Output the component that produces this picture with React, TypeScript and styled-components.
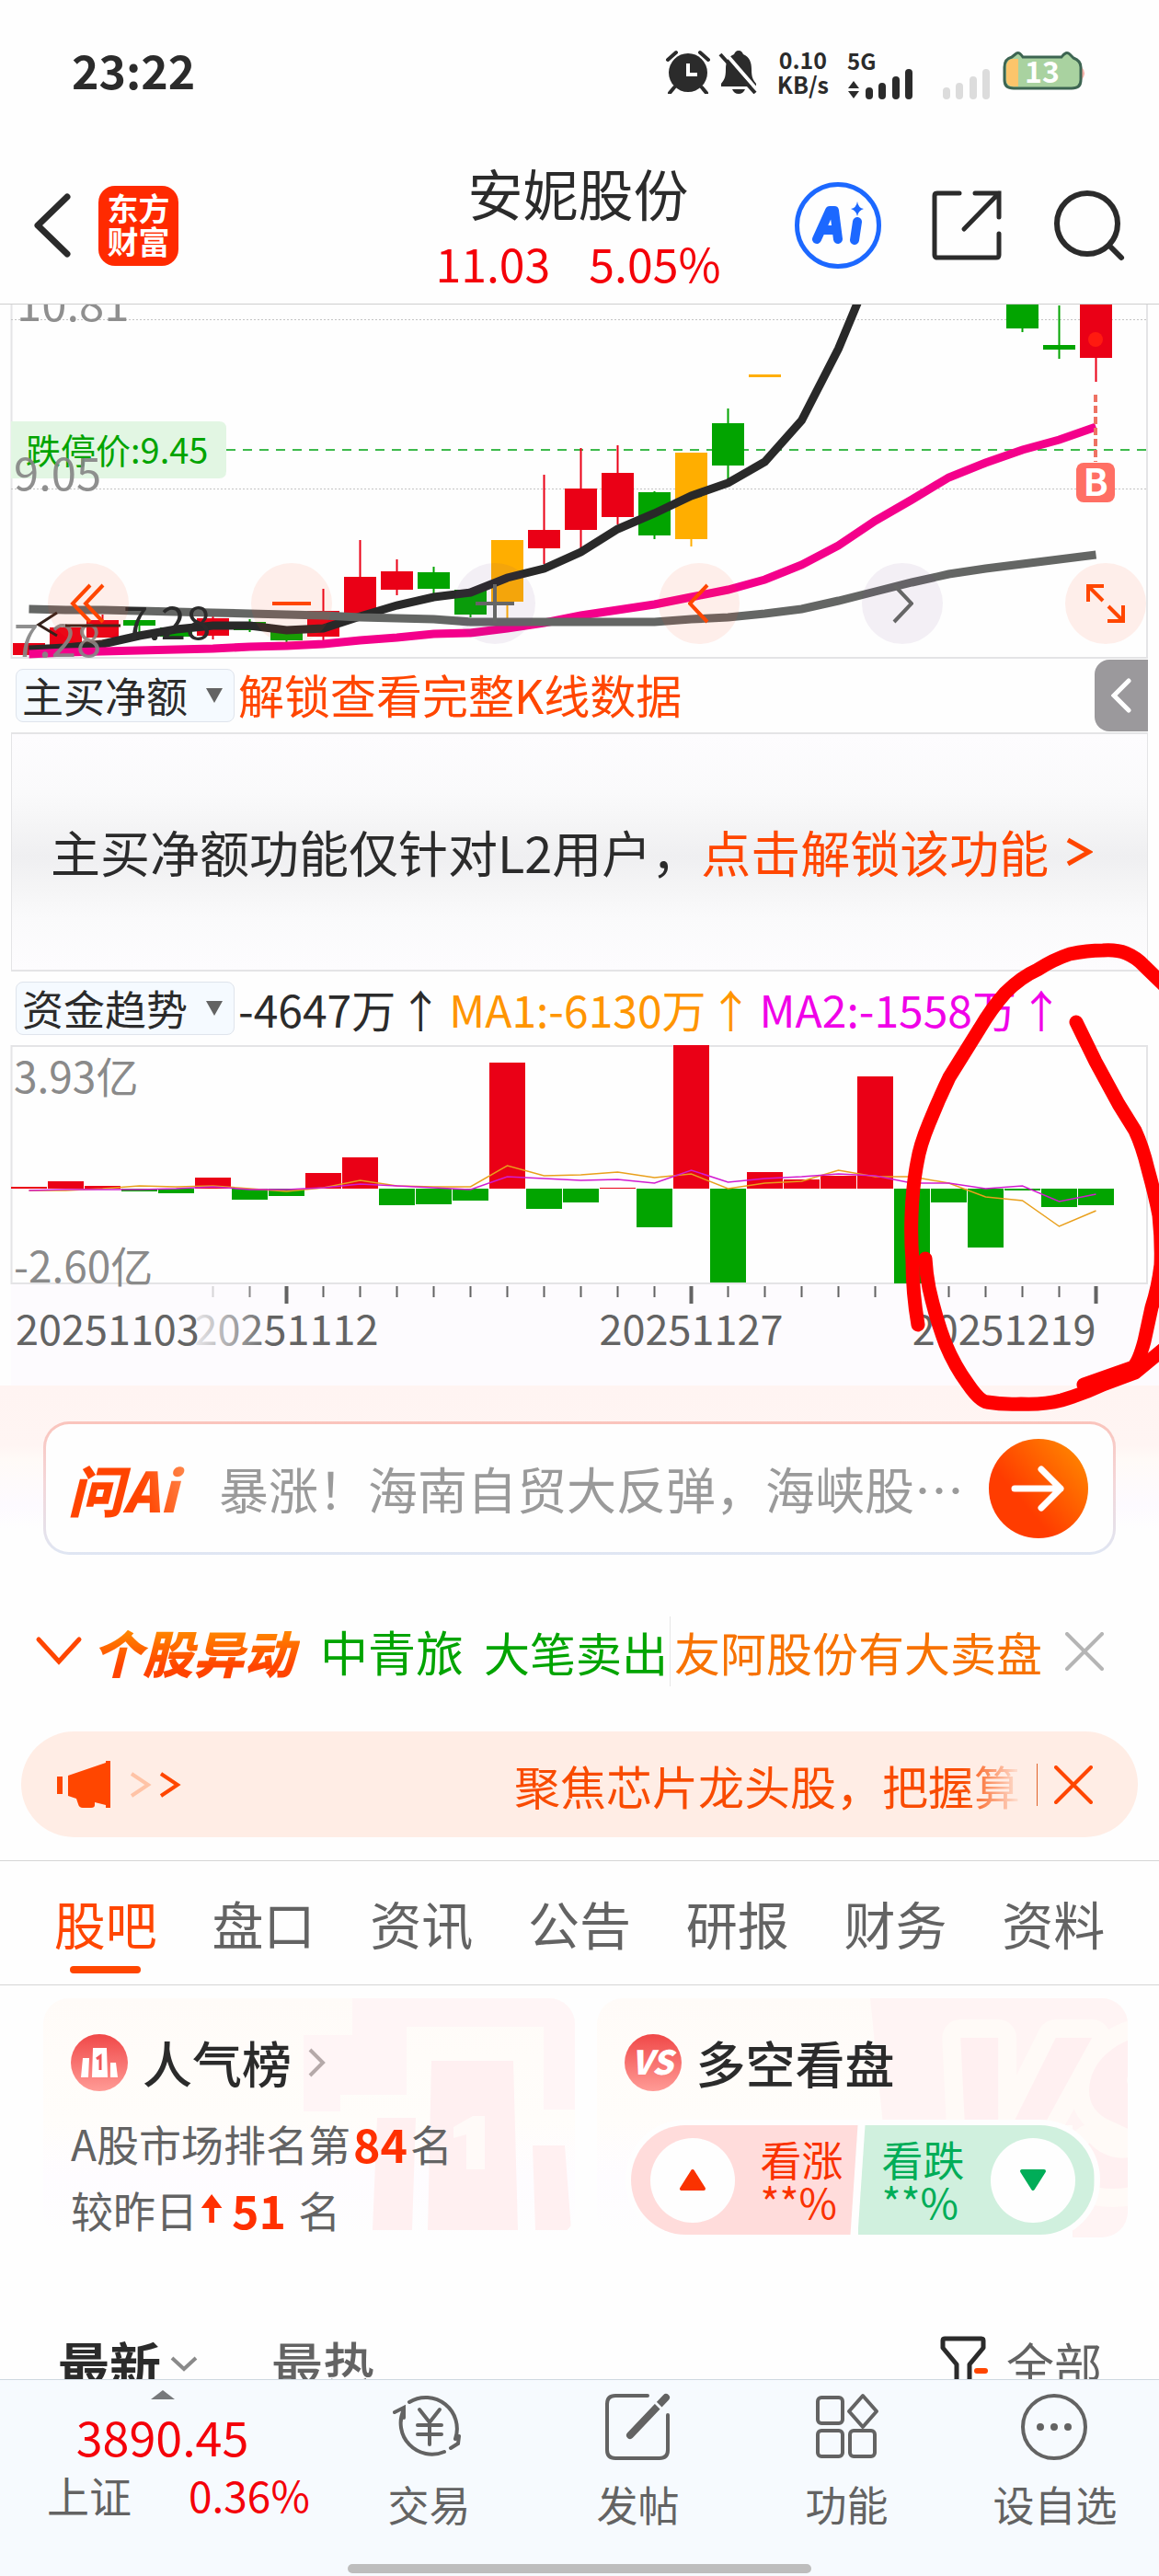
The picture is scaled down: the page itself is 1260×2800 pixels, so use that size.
import React from "react";
import styled, { createGlobalStyle } from "styled-components";

const C = {
  ink: "#2b2b2b",
  gray: "#636363",
  soft: "#8a8a8a",
  red: "#f40009",
  up: "#ea0016",
  down: "#02a400",
  gold: "#ffae00",
  accent: "#ff4600",
  line: "#e4e4e6",
};

const Global = createGlobalStyle`
  * { box-sizing: border-box; }
  body { margin: 0; background: #fefefe; }
  button, input, select { font: inherit; color: inherit; border: 0; background: none; padding: 0; margin: 0; }
  a { color: inherit; text-decoration: none; }
  h1, h2, p { margin: 0; font-weight: 400; }
  svg { display: block; flex: none; }
`;

const Page = styled.div`
  height: 100vh;
  display: flex;
  flex-direction: column;
  overflow: hidden;
  background: #fefefe;
  color: ${C.ink};
  font-family: "Noto Sans CJK SC", "Noto Sans", sans-serif;
`;

/* ---------- status bar ---------- */
const StatusBar = styled.div`
  height: 148px;
  flex: none;
  display: flex;
  align-items: center;
  justify-content: space-between;
  padding: 8px 78px 0;
`;
const Clock = styled.time`
  font-size: 50px;
  line-height: 60px;
  font-weight: 700;
  padding-bottom: 6px;
`;
const StatusIcons = styled.div`
  display: flex;
  align-items: center;
`;
const AlarmIcon = styled.svg`
  margin-right: 8px;
`;
const WeakSignal = styled.svg`
  margin: 0 12px 0 31px;
`;
const Speed = styled.div`
  margin: 0 20px;
  font-size: 25px;
  line-height: 27px;
  font-weight: 700;
  text-align: center;
`;

function StatusGlyphs() {
  return (
    <StatusIcons>
      <AlarmIcon width="50" height="48" viewBox="0 0 50 48">
        <circle cx="25" cy="25" r="21" fill={C.ink} />
        <path d="M25 15v12h10" fill="none" stroke="#fff" strokeWidth="4" />
        <path d="M3 11L12 3M47 11L38 3M10 41l-5 6M40 41l5 6" stroke={C.ink} strokeWidth="4" strokeLinecap="round" />
      </AlarmIcon>
      <svg width="44" height="48" viewBox="0 0 44 48">
        <path d="M22 1c3 0 4 2 5 4 7 3 9 9 9 16 0 10 2 12 5 16v3H3v-3c3-4 5-6 5-16 0-7 2-13 9-16 1-2 2-4 5-4zM15 43h14c-1 3-4 5-7 5s-6-2-7-5z" fill={C.ink} />
        <path d="M6 2L44 46" stroke="#fefefe" strokeWidth="4" />
        <path d="M2 5L40 47" stroke={C.ink} strokeWidth="4" />
      </svg>
      <Speed>
        0.10
        <br />
        KB/s
      </Speed>
      <svg width="72" height="66" viewBox="0 -12 72 66">
        <text x="0" y="19" fontSize="24" fontWeight="700" fill={C.ink}>5G</text>
        <path d="M7 31l6 8H1zM7 50l6-8H1z" fill={C.ink} />
        <path d="M24 47V42M38 47V37M53 47V30M67 47V22" stroke={C.ink} strokeWidth="8" strokeLinecap="round" />
      </svg>
      <WeakSignal width="54" height="66" viewBox="0 -12 54 66">
        <path d="M5 47V42M19 47V37M34 47V30M48 47V22" stroke="#dcdcdc" strokeWidth="8" strokeLinecap="round" />
      </WeakSignal>
      <svg width="92" height="52" viewBox="0 -4 92 52">
        <path d="M86 17q6 6 0 14z" fill="#f4b0a8" />
        <path d="M10 6l5-4q3-2 7 4h42q5-7 9-3l4 4q8 3 8 10v14q0 9-10 9H12Q2 40 2 31V17Q2 8 10 6z" fill="#a9d2a0" stroke="#3d6552" strokeWidth="3" />
        <path d="M10 8h7v30h-5q-8 0-8-8V17q0-7 6-9z" fill="#fcc56b" />
        <text x="43" y="34" textAnchor="middle" fontSize="32" fontWeight="700" fill="#fff">13</text>
      </svg>
    </StatusIcons>
  );
}

/* ---------- header ---------- */
const Header = styled.header`
  height: 183px;
  flex: none;
  display: grid;
  grid-template-columns: 1fr auto 1fr;
  align-items: center;
  padding: 12px 36px 0 33px;
  border-bottom: 1px solid #cfcfcf;
`;
const HeaderSide = styled.div<{ $end?: boolean }>`
  display: flex;
  align-items: center;
  gap: ${(p) => (p.$end ? 54 : 28)}px;
  justify-content: ${(p) => (p.$end ? "flex-end" : "flex-start")};
`;
const IconButton = styled.button`
  display: flex;
  align-items: center;
  justify-content: center;
  cursor: pointer;
`;
const AppLogo = styled.a`
  width: 87px;
  height: 87px;
  border-radius: 18px;
  background: #ff2a00;
  color: #fff;
  font-size: 34px;
  line-height: 36px;
  font-weight: 700;
  text-align: center;
  padding-top: 6px;
`;
const StockTitle = styled.div`
  text-align: center;
  line-height: 76px;
  padding-top: 4px;
`;
const StockName = styled.h1`
  font-size: 60px;
  line-height: 76px;
`;
const Quote = styled.p`
  display: flex;
  justify-content: center;
  gap: 42px;
  font-size: 50px;
  line-height: 76px;
  color: ${C.red};
`;

/* ---------- k-line ---------- */
const ChartBox = styled.section`
  position: relative;
  flex: none;
`;
const FullSvg = styled.svg`
  width: 100%;
  height: auto;
`;
const ChartTools = styled.div`
  position: absolute;
  left: 52px;
  right: 14px;
  bottom: 16px;
  display: flex;
  justify-content: space-between;
`;
const RoundTool = styled.button<{ $muted?: boolean }>`
  width: 88px;
  height: 88px;
  border-radius: 50%;
  background: ${(p) => (p.$muted ? "rgba(110,70,140,.08)" : "rgba(255,80,30,.09)")};
  color: ${(p) => (p.$muted ? "#666" : C.accent)};
  display: flex;
  align-items: center;
  justify-content: center;
`;

const cx = (k: number) => 31.5 + 40 * k;
const up = C.up;
const dn = C.down;
const go = C.gold;
/* index, colour, body top, body bottom, wick top, wick bottom */
const candles: [number, string, number, number, number, number][] = [
  [0, up, 699, 712, 699, 712],
  [1, up, 682, 703, 682, 703],
  [2, up, 674, 693, 668, 693],
  [3, dn, 674, 680, 674, 687],
  [4, dn, 682, 692, 678, 694],
  [5, up, 672, 691, 670, 695],
  [6, dn, 676, 685, 673, 687],
  [7, dn, 687, 696, 687, 698],
  [8, up, 664, 692, 640, 696],
  [9, up, 627, 675, 587, 675],
  [10, up, 621, 641, 608, 647],
  [11, dn, 622, 640, 616, 646],
  [12, dn, 641, 668, 641, 671],
  [13, go, 587, 654, 587, 672],
  [14, up, 576, 596, 516, 613],
  [15, up, 531, 576, 487, 597],
  [16, up, 514, 562, 484, 570],
  [17, dn, 535, 582, 534, 586],
  [18, go, 492, 586, 492, 594],
  [19, dn, 460, 506, 444, 523],
  [20, go, 407, 410, 407, 410],
  [27, dn, 300, 357, 300, 361],
  [28, dn, 375, 380, 332, 390],
  [29, up, 300, 389, 300, 415],
];
const maBlack = [706, 704, 700, 691, 684, 680, 680, 685, 683, 670, 658, 649, 644, 628, 618, 600, 575, 558, 539, 525, 502, 457, 379, 283];
const maPink = [711, 709, 708, 707, 706, 705, 703, 702, 700, 696, 693, 689, 688, 683, 677, 669, 663, 657, 649, 641, 630, 614, 593, 566, 543, 519, 503, 489, 478, 464];
const maGray = [662, 663, 663, 664, 665, 666, 667, 668, 669, 671, 672, 673, 676, 676, 676, 676, 676, 676, 673, 671, 667, 662, 653, 643, 633, 624, 618, 613, 608, 603];
const pts = (a: number[]) => a.map((y, k) => `${cx(k)},${y}`).join(" ");

function KLine() {
  return (
    <FullSvg viewBox="0 331 1260 385" role="img" aria-label="日K线">
      <path d="M12.500 331V715H1247V331" fill="none" stroke={C.line} strokeWidth="2" />
      <path d="M12 347.500H1246M12 531.500H1246" stroke="#c4c4c4" strokeDasharray="2 2" />
      <path d="M12 458h226q8 0 8 8v46q0 8-8 8H12z" fill="#e2f6e3" />
      <path d="M246 489H1246" stroke="#3dba4c" strokeWidth="2" strokeDasharray="10 8" />
      <text x="28" y="504" fontSize="38" fill={C.down}>跌停价:9.45</text>
      {candles.map(([k, c, t, b, wt, wb]) => (
        <g key={k} fill={c}>
          <rect x={cx(k) - 17.5} y={t} width="35" height={b - t} />
          <rect x={cx(k) - 1} y={wt} width="2" height={wb - wt} />
        </g>
      ))}
      <g fill="none" strokeWidth="9">
        <polyline points={pts(maBlack)} stroke="#292929" />
        <polyline points={pts(maPink)} stroke="#f4008b" />
        <polyline points={pts(maGray)} stroke="#646664" />
      </g>
      <g fontSize="49" fill="#858585" fillOpacity=".92">
        <text x="18" y="349">10.81</text>
        <text x="15" y="533">9.05</text>
        <text x="15" y="714">7.28</text>
      </g>
      <circle cx="1191" cy="369" r="8" fill="#ff1a10" />
      <path d="M1191 429v73" stroke="#ee7263" strokeWidth="4" strokeDasharray="8 4" />
      <rect x="1170" y="503" width="42" height="43" rx="8" fill="#ff6f64" />
      <text x="1191" y="539" textAnchor="middle" fontSize="40" fontWeight="700" fill="#fff">B</text>
      <path d="M62 666L42 679L62 691M71 680H131" fill="none" stroke="#33211a" strokeWidth="3" />
      <text x="134" y="695" fontSize="49" fill={C.ink}>7.28</text>
    </FullSvg>
  );
}

/* ---------- indicator rows ---------- */
const IndicatorRow = styled.div`
  height: 80px;
  flex: none;
  display: flex;
  align-items: center;
  padding: 0 12px 0 17px;
`;
const Picker = styled.label`
  flex: none;
  width: 238px;
  height: 58px;
  display: flex;
  align-items: center;
  justify-content: space-between;
  padding: 0 12px 0 6px;
  border: 1px solid #dfe4ec;
  border-radius: 8px;
  background: #f5faff;
`;
const PickerSelect = styled.select`
  appearance: none;
  width: 190px;
  height: 56px;
  font-size: 45px;
  line-height: 56px;
`;
const UnlockLink = styled.a`
  flex: 1;
  margin-left: 4px;
  font-size: 50px;
  line-height: 64px;
  padding-bottom: 4px;
  color: ${C.accent};
`;
const DrawerTab = styled.button`
  width: 58px;
  height: 78px;
  border-radius: 16px 0 0 16px;
  background: #9b999c;
  display: flex;
  align-items: center;
  justify-content: center;
`;
const LockedPanel = styled.div`
  height: 260px;
  flex: none;
  margin: 0 12px;
  padding-left: 42px;
  border: 2px solid ${C.line};
  border-width: 2px 1px;
  background: linear-gradient(#fdfcfe, #fafafb 25%, #f5f5f6 38%, #efeff1 52%, #f5f5f6 66%, #fafafb 78%, #fdfcfe);
  display: flex;
  align-items: center;
  font-size: 54px;
  line-height: 72px;
  white-space: nowrap;
`;
const LockedLink = styled.a`
  color: ${C.accent};
  display: flex;
  align-items: center;
  gap: 18px;
`;
const Reading = styled.span<{ $c: string }>`
  display: flex;
  color: ${(p) => p.$c};
  font-size: 48px;
  line-height: 64px;
  white-space: nowrap;
  margin-left: 4px;
`;
const Arrow = styled.span`
  width: 54px;
  display: flex;
  justify-content: center;
`;

function PickerBox({ name, value }: { name: string; value: string }) {
  return (
    <Picker>
      <PickerSelect aria-label={name} defaultValue={value}>
        <option>{value}</option>
      </PickerSelect>
      <svg width="18" height="16" viewBox="0 0 18 16">
        <path d="M0 0h18L9 16z" fill="#636363" />
      </svg>
    </Picker>
  );
}

/* ---------- fund flow chart ---------- */
const flow = [1290, 1284, 1289, 1295, 1297, 1280, 1304, 1300, 1275, 1258, 1310, 1309, 1305, 1155, 1314, 1307, 1291, 1334, 1136, 1394, 1274, 1282, 1278, 1170, 1395, 1307, 1356, 1294, 1312, 1310];
const flowMa1 = [1294, 1294, 1292, 1289, 1290, 1289, 1292, 1295, 1291, 1283, 1289, 1290, 1290, 1267, 1278, 1277, 1274, 1280, 1276, 1292, 1286, 1284, 1272, 1279, 1279, 1286, 1301, 1305, 1333, 1316];
const flowMa2 = [1294, 1293, 1293, 1293, 1292, 1290, 1293, 1293, 1291, 1287, 1289, 1291, 1293, 1279, 1281, 1283, 1282, 1286, 1272, 1285, 1281, 1279, 1276, 1278, 1286, 1286, 1292, 1289, 1306, 1298];

function FlowChart() {
  return (
    <FullSvg viewBox="0 1136 1260 370" role="img" aria-label="资金趋势">
      <defs>
        <linearGradient id="dateFade">
          <stop offset="0" stopColor="#fdfbfe" />
          <stop offset="1" stopColor="#fdfbfe" stopOpacity="0" />
        </linearGradient>
      </defs>
      <rect x="12" y="1396" width="1248" height="110" fill="#fdfbfe" />
      <path d="M12.500 1395V1137H1247V1395z" fill="none" stroke={C.line} strokeWidth="2" />
      <g fontSize="46" fill={C.soft}>
        <text x="15" y="1188">3.93亿</text>
        <text x="15" y="1394">-2.60亿</text>
      </g>
      {flow.map((y, k) => (
        <rect key={k} x={12 + 40 * k} y={Math.min(y, 1292)} width="39" height={Math.abs(y - 1292)} fill={y < 1292 ? up : dn} />
      ))}
      <polyline points={pts(flowMa1)} fill="none" stroke="#e9a01c" strokeWidth="1.500" />
      <polyline points={pts(flowMa2)} fill="none" stroke="#d21bd0" strokeWidth="1.500" />
      {flow.map((_, k) => {
        const major = k === 7 || k === 18 || k === 29;
        if (k < 5) return null;
        return (
          <rect
            key={k}
            x={cx(k) - (major ? 2 : 1)}
            y="1398"
            width={major ? 4 : 2}
            height={major ? 19 : 12}
            fill="#636363"
            opacity={k === 5 ? 0.25 : k === 6 ? 0.75 : 1}
          />
        );
      })}
      <g fontSize="45" fill="#636363">
        <text x={cx(7)} y="1462" textAnchor="middle">20251112</text>
        <rect x="200" y="1420" width="95" height="50" fill="url(#dateFade)" />
        <text x="17" y="1462">20251103</text>
        <text x={cx(18)} y="1462" textAnchor="middle">20251127</text>
        <text x={cx(29)} y="1462" textAnchor="end">20251219</text>
      </g>
    </FullSvg>
  );
}

const FlowSection = styled.section`
  position: relative;
  flex: none;
`;
const Marker = styled.svg`
  position: absolute;
  top: 0;
  left: 0;
  width: 100%;
  height: auto;
  overflow: hidden;
  pointer-events: none;
  z-index: 2;
  margin-top: -36px;
`;

/* ---------- ask ai ---------- */
const AskSection = styled.section`
  flex: none;
  padding: 39px 47px 50px;
  background: linear-gradient(#fff4f2 0, #fff5f3 65px, #fffaf7 80px, #fdfaff 130px, #fefefe 155px);
`;
const AskCard = styled.form`
  height: 145px;
  display: flex;
  align-items: center;
  gap: 24px;
  padding: 0 27px 0 24px;
  border: 3px solid transparent;
  border-radius: 28px;
  background: linear-gradient(#fefefe, #fefefe) padding-box, linear-gradient(#fac4bc, #f4d6d8 45%, #dfe6f3) border-box;
`;
const AskBrand = styled.label`
  width: 140px;
  font-size: 60px;
  line-height: 80px;
  font-weight: 900;
  font-style: italic;
  white-space: nowrap;
  color: transparent;
  background: linear-gradient(75deg, #ff4400 55%, #ff9a60);
  background-clip: text;
`;
const AskInput = styled.input`
  flex: 1;
  min-width: 0;
  height: 84px;
  font-size: 54px;
  outline: none;
  &::placeholder {
    color: #9a9a9a;
    opacity: 1;
  }
`;
const AskGo = styled.button`
  flex: none;
  width: 108px;
  height: 108px;
  border-radius: 50%;
  background: linear-gradient(50deg, #ff3c00 35%, #ff9100);
  display: flex;
  align-items: center;
  justify-content: center;
`;

/* ---------- movement row ---------- */
const MoveRow = styled.section`
  flex: none;
  height: 110px;
  display: flex;
  align-items: center;
  padding: 0 60px 0 38px;
  font-size: 50px;
  line-height: 76px;
  white-space: nowrap;
`;
const MoveTitle = styled.h2`
  margin: 0 22px 0 10px;
  width: 226px;
  font-size: 55px;
  line-height: 80px;
  font-weight: 900;
  font-style: italic;
  color: transparent;
  background: linear-gradient(#ff8a00 20%, #ff4400 70%);
  background-clip: text;
`;
const MoveItem = styled.a<{ $c: string }>`
  display: flex;
  gap: 22px;
  color: ${(p) => p.$c};
`;
const MoveName = styled.span`
  font-size: 52px;
`;
const MoveRule = styled.span`
  width: 1px;
  height: 76px;
  margin: 0 4px 0 2px;
  background: #e6e6e6;
`;
const Spacer = styled.span`
  flex: 1;
`;

/* ---------- notice ---------- */
const Notice = styled.section`
  flex: none;
  height: 115px;
  margin: 32px 23px 25px;
  padding: 0 49px 0 38px;
  border-radius: 58px;
  background: #ffede5;
  display: flex;
  align-items: center;
  gap: 18px;
  color: ${C.accent};
`;
const NoticeText = styled.p`
  flex: 1;
  text-align: right;
  font-size: 50px;
  line-height: 72px;
  white-space: nowrap;
  color: transparent;
  background: linear-gradient(90deg, #f94b00 93%, rgba(249, 75, 0, 0.05));
  background-clip: text;
`;
const NoticeRule = styled.span`
  width: 1px;
  height: 46px;
  background: #e0622a;
`;

/* ---------- tabs ---------- */
const Tabs = styled.nav`
  flex: none;
  height: 136px;
  display: flex;
  padding: 0 29px;
  border-top: 1px solid #d6d6d6;
  border-bottom: 1px solid #d6d6d6;
`;
const Tab = styled.button<{ $on?: boolean }>`
  flex: 1;
  display: flex;
  flex-direction: column;
  align-items: center;
  padding-top: 28px;
  gap: 8px;
  font-size: 56px;
  line-height: 78px;
  color: ${(p) => (p.$on ? C.accent : C.gray)};
  &::after {
    content: "";
    width: 77px;
    height: 8px;
    border-radius: 4px;
    background: ${(p) => (p.$on ? C.accent : "transparent")};
  }
`;

/* ---------- cards ---------- */
const Cards = styled.section`
  flex: none;
  display: grid;
  grid-template-columns: 1fr 1fr;
  gap: 24px;
  padding: 14px 34px 0 47px;
`;
const Card = styled.article`
  position: relative;
  overflow: hidden;
  height: 260px;
  padding: 36px 30px 0;
  border-radius: 28px;
  background: linear-gradient(#fffbf8, #fffdfa 50%, #fefcff 75%, #fefefe);
`;
const Watermark = styled.svg`
  position: absolute;
  right: 0;
  top: 0;
  height: 260px;
  width: 300px;
`;
const CardHead = styled.h2`
  position: relative;
  display: flex;
  align-items: center;
  gap: 16px;
  font-size: 54px;
  line-height: 68px;
  font-weight: 500;
`;
const CardLine = styled.p<{ $gap: number }>`
  position: relative;
  display: flex;
  align-items: center;
  margin-top: ${(p) => p.$gap}px;
  font-size: 46px;
  line-height: 64px;
  color: ${C.gray};
`;
const Strong = styled.strong`
  font-size: 50px;
  font-weight: 700;
  color: #ff3000;
  margin: 0 3px;
`;
const Vote = styled.div`
  position: relative;
  display: flex;
  width: 504px;
  height: 119px;
  margin: 34px 0 0 7px;
  border-radius: 60px;
  outline: 6px solid #fefefe;
  background: #fefefe;
  overflow: hidden;
`;
const VoteSide = styled.button<{ $down?: boolean }>`
  flex: 1;
  display: flex;
  flex-direction: ${(p) => (p.$down ? "row-reverse" : "row")};
  align-items: center;
  justify-content: space-between;
  padding: ${(p) => (p.$down ? "0 21px 0 26px" : "0 16px 0 21px")};
  text-align: left;
  font-size: 45px;
  line-height: 46px;
  color: ${(p) => (p.$down ? "#00ad58" : "#fa3200")};
  background: ${(p) => (p.$down ? "#d0f0de" : "#ffdcdb")};
  clip-path: ${(p) => (p.$down ? "polygon(8px 0, 100% 0, 100% 100%, 0 100%)" : "polygon(0 0, 100% 0, calc(100% - 8px) 100%, 0 100%)")};
`;
const VoteDot = styled.span`
  width: 92px;
  height: 92px;
  border-radius: 50%;
  background: #fefefe;
  display: flex;
  align-items: center;
  justify-content: center;
`;

/* ---------- filter row ---------- */
const FilterRow = styled.div`
  flex: none;
  height: 80px;
  margin-top: 97px;
  display: flex;
  align-items: center;
  padding: 0 62px 0 63px;
  line-height: 80px;
`;
const SortButton = styled.button<{ $on?: boolean }>`
  display: flex;
  align-items: center;
  gap: 10px;
  margin-right: 80px;
  font-size: 56px;
  font-weight: ${(p) => (p.$on ? 700 : 500)};
  color: ${(p) => (p.$on ? C.ink : C.gray)};
`;
const AllButton = styled.button`
  display: flex;
  align-items: center;
  gap: 18px;
  margin-left: auto;
  font-size: 52px;
  color: ${C.gray};
`;

const Scroll = styled.main`
  flex: 1;
  min-height: 0;
  overflow: hidden;
  display: flex;
  flex-direction: column;
`;

/* ---------- bottom bar ---------- */
const Bottom = styled.footer`
  flex: none;
  height: 214px;
  background: #f6fafe;
  border-top: 1px solid #cfd8e0;
  display: flex;
  flex-direction: column;
  justify-content: space-between;
`;
const BottomRow = styled.div`
  display: grid;
  grid-template-columns: 353fr 227fr 227fr 227fr 226fr;
`;
const IndexBox = styled.a`
  display: flex;
  flex-direction: column;
  align-items: center;
  padding-top: 11px;
  color: ${C.red};
`;
const IndexValue = styled.span`
  margin-top: 7px;
  font-size: 52px;
  line-height: 66px;
`;
const IndexDetail = styled.span`
  display: flex;
  align-items: center;
  gap: 62px;
  width: 100%;
  padding-left: 51px;
  font-size: 46px;
  line-height: 60px;
  white-space: nowrap;
`;
const Muted = styled.span`
  color: ${C.gray};
`;
const NavItem = styled.button`
  display: flex;
  flex-direction: column;
  align-items: center;
  padding-top: 12px;
  gap: 15px;
  font-size: 45px;
  line-height: 60px;
  color: ${C.gray};
`;
const HomeBar = styled.div`
  width: 504px;
  height: 10px;
  margin: 0 auto 3px;
  border-radius: 5px;
  background: #bdbdbd;
`;

const Cross = ({ size, color }: { size: number; color: string }) => (
  <svg width={size} height={size} viewBox="0 0 42 42">
    <path d="M2 2l38 38M40 2L2 40" stroke={color} strokeWidth="4" strokeLinecap="round" />
  </svg>
);

const nav = [
  {
    label: "交易",
    icon: (
      <>
        <path d="M18 12A34 34 0 0 1 68 52M56 66A34 34 0 0 1 12 20M2 23l10-5v11M72 49l-1 8-8 5" />
        <path d="M29 20l11 14 11-14M27 37h26M27 47h26M40 34v24" />
      </>
    ),
  },
  {
    label: "发帖",
    icon: (
      <>
        <path d="M50 5H15Q6 5 6 14v50q0 9 9 9h48q9 0 9-9V26" />
        <path d="M70 7L31 48" strokeWidth="8" />
        <path d="M59 13l8 8" stroke="#f6fafe" strokeWidth="3" />
      </>
    ),
  },
  {
    label: "功能",
    icon: (
      <>
        <rect x="8" y="7" width="27" height="28" rx="4" />
        <rect x="8" y="43" width="27" height="28" rx="4" />
        <rect x="43" y="43" width="27" height="28" rx="4" />
        <path d="M57 5l15 17-15 17-15-17z" strokeLinejoin="round" />
      </>
    ),
  },
  {
    label: "设自选",
    icon: (
      <>
        <circle cx="39" cy="39" r="34" />
        <path d="M24 39h0M39 39h0M54 39h0" strokeWidth="8" />
      </>
    ),
  },
];

export default function App() {
  return (
    <Page>
      <Global />
      <StatusBar>
        <Clock>23:22</Clock>
        <StatusGlyphs />
      </StatusBar>
      <Header>
        <HeaderSide>
          <IconButton aria-label="返回">
            <svg width="46" height="72" viewBox="0 0 46 72">
              <path d="M40 5L8 36l32 31" fill="none" stroke={C.ink} strokeWidth="7" strokeLinecap="round" strokeLinejoin="round" />
            </svg>
          </IconButton>
          <AppLogo href="#home">
            东方
            <br />
            财富
          </AppLogo>
        </HeaderSide>
        <StockTitle>
          <StockName>安妮股份</StockName>
          <Quote>
            <span>11.03</span>
            <span>5.05%</span>
          </Quote>
        </StockTitle>
        <HeaderSide $end>
          <IconButton aria-label="AI">
            <svg width="94" height="94" viewBox="0 0 94 94">
              <circle cx="47" cy="47" r="44.500" fill="none" stroke="#1c68ff" strokeWidth="5" />
              <g fill="none" stroke="#1c68ff" strokeWidth="10" strokeLinecap="round" strokeLinejoin="round">
                <path d="M24 62L38 31h5l4 31M31 52h14" />
                <path d="M68 43l-3 20" />
              </g>
              <path d="M68 21q1 7 7 8-6 2-7 8-1-6-7-8 6-1 7-8z" fill="#1c68ff" />
            </svg>
          </IconButton>
          <IconButton aria-label="分享">
            <svg width="78" height="78" viewBox="0 0 78 78" fill="none" stroke={C.ink} strokeWidth="5" strokeLinecap="round">
              <path d="M31 4H7Q4 4 4 7v64q0 3 3 3h64q3 0 3-3V48" />
              <path d="M48 4h26v26M74 4L36 43" />
            </svg>
          </IconButton>
          <IconButton aria-label="搜索">
            <svg width="80" height="80" viewBox="0 0 80 80" fill="none" stroke={C.ink} strokeWidth="6" strokeLinecap="round">
              <circle cx="38" cy="38" r="33" />
              <path d="M62 62l13 13" />
            </svg>
          </IconButton>
        </HeaderSide>
      </Header>

      <Scroll>
        <ChartBox>
          <KLine />
          <ChartTools>
            <RoundTool aria-label="最早">
              <svg width="40" height="44" viewBox="0 0 40 44" fill="none" stroke="currentColor" strokeWidth="4">
                <path d="M22 2L3 22l19 20M36 2L17 22l19 20" />
              </svg>
            </RoundTool>
            <RoundTool aria-label="缩小">
              <svg width="44" height="44" viewBox="0 0 44 44" stroke="currentColor" strokeWidth="4">
                <path d="M1 22h42" />
              </svg>
            </RoundTool>
            <RoundTool $muted aria-label="放大">
              <svg width="44" height="44" viewBox="0 0 44 44" stroke="currentColor" strokeWidth="4">
                <path d="M1 22h42M22 1v42" />
              </svg>
            </RoundTool>
            <RoundTool aria-label="向前">
              <svg width="24" height="44" viewBox="0 0 24 44" fill="none" stroke="currentColor" strokeWidth="4">
                <path d="M21 2L2 22l19 20" />
              </svg>
            </RoundTool>
            <RoundTool $muted aria-label="向后">
              <svg width="24" height="44" viewBox="0 0 24 44" fill="none" stroke="currentColor" strokeWidth="4">
                <path d="M3 2l19 20L3 42" />
              </svg>
            </RoundTool>
            <RoundTool aria-label="全屏">
              <svg width="44" height="44" viewBox="0 0 44 44" fill="none" stroke="currentColor" strokeWidth="4">
                <path d="M3 20V3h17M4 4l15 15M41 24v17H24M40 40L25 25" />
              </svg>
            </RoundTool>
          </ChartTools>
        </ChartBox>

        <IndicatorRow>
          <PickerBox name="副图指标一" value="主买净额" />
          <UnlockLink href="#unlock">解锁查看完整K线数据</UnlockLink>
          <DrawerTab aria-label="展开">
            <svg width="22" height="38" viewBox="0 0 22 38">
              <path d="M19 3L3 19l16 16" fill="none" stroke="#fff" strokeWidth="5" strokeLinecap="round" />
            </svg>
          </DrawerTab>
        </IndicatorRow>
        <LockedPanel>
          主买净额功能仅针对L2用户，
          <LockedLink href="#unlock">
            点击解锁该功能
            <svg width="30" height="32" viewBox="0 0 30 32">
              <path d="M3 3l23 13L3 29" fill="none" stroke={C.accent} strokeWidth="5" />
            </svg>
          </LockedLink>
        </LockedPanel>

        <FlowSection>
          <IndicatorRow>
            <PickerBox name="副图指标二" value="资金趋势" />
            <Reading $c={C.ink}>
              -4647万<Arrow>↑</Arrow>
            </Reading>
            <Reading $c="#ff9500">
              MA1:-6130万<Arrow>↑</Arrow>
            </Reading>
            <Reading $c="#f000e8">
              MA2:-1558万<Arrow>↑</Arrow>
            </Reading>
          </IndicatorRow>
          <FlowChart />
          <Marker viewBox="0 1020 1260 530" aria-hidden="true">
            <g fill="none" stroke="#ff0000" strokeWidth="15" strokeLinecap="round" strokeLinejoin="round">
              <path d="M998 1440Q992 1405 992 1371Q990 1345 991 1321Q992 1290 997 1264Q1000 1245 1010 1221Q1020 1196 1032 1171L1065 1118Q1078 1096 1093 1079Q1110 1062 1128 1054Q1145 1043 1163 1037Q1182 1033 1199 1033Q1214 1032 1224 1036Q1236 1041 1244 1050L1275 1080" />
              <path d="M1170 1111L1191 1154L1216 1200L1234 1229Q1242 1246 1248 1271Q1256 1300 1260 1321Q1263 1350 1262 1375Q1259 1400 1252 1421L1244 1458Q1238 1480 1232 1486L1178 1505" />
              <path d="M1006 1368Q1007 1385 1010 1400Q1017 1432 1028 1461Q1038 1485 1052 1504Q1065 1523 1073 1524Q1090 1527 1110 1526Q1135 1527 1154 1522Q1178 1515 1199 1505L1234 1492L1275 1458" />
            </g>
          </Marker>
        </FlowSection>

        <AskSection>
          <AskCard>
            <AskBrand htmlFor="ask">问Ai</AskBrand>
            <AskInput id="ask" placeholder="暴涨！海南自贸大反弹，海峡股…" />
            <AskGo type="button" aria-label="提问">
              <svg width="60" height="52" viewBox="0 0 60 52" fill="none" stroke="#fff" strokeWidth="7" strokeLinecap="round" strokeLinejoin="round">
                <path d="M4 26h50M33 5l21 21-21 21" />
              </svg>
            </AskGo>
          </AskCard>
        </AskSection>

        <MoveRow>
          <svg width="52" height="34" viewBox="0 0 52 34">
            <path d="M4 4l22 24L48 4" fill="none" stroke={C.accent} strokeWidth="5" strokeLinecap="round" />
          </svg>
          <MoveTitle>个股异动</MoveTitle>
          <MoveItem href="#m1" $c={C.down}>
            <MoveName>中青旅</MoveName>
            <span>大笔卖出</span>
          </MoveItem>
          <MoveRule />
          <MoveItem href="#m2" $c="#f77200">友阿股份有大卖盘</MoveItem>
          <Spacer />
          <IconButton aria-label="关闭异动">
            <Cross size={42} color="#b5b5b5" />
          </IconButton>
        </MoveRow>

        <Notice>
          <svg width="62" height="52" viewBox="0 0 62 52" fill={C.accent}>
            <rect x="1" y="17" width="6" height="19" />
            <path d="M13 16L54 2V0h5v51h-5v-3l-12-3v3q0 3-4 3h-9q-4 0-5-4l-2-6-9-3z" />
          </svg>
          <svg width="58" height="30" viewBox="0 0 58 30" fill="none" strokeWidth="4">
            <path d="M2 3l18 12L2 27" stroke="#ffc3a6" />
            <path d="M34 3l18 12-18 12" stroke={C.accent} />
          </svg>
          <NoticeText>聚焦芯片龙头股，把握算</NoticeText>
          <NoticeRule />
          <IconButton aria-label="关闭公告">
            <Cross size={42} color={C.accent} />
          </IconButton>
        </Notice>

        <Tabs>
          {["股吧", "盘口", "资讯", "公告", "研报", "财务", "资料"].map((t, i) => (
            <Tab key={t} $on={i === 0}>
              {t}
            </Tab>
          ))}
        </Tabs>

        <Cards>
          <Card>
            <Watermark viewBox="324 2172 300 260">
              <path d="M382 2172h242v121h-34v-90H441v74h-72v18h-40v-83h53z" fill="#fff5f6" />
              <path d="M468 2240h89l5 184h-98zM409 2302h42l-4 122h-43zM578 2332h35l7 92h-39z" fill="#fff0f1" />
              <path d="M492 2312l21-12h13v58h-20v-38l-14 4z" fill="#fffaf8" />
            </Watermark>
            <CardHead>
              <svg width="62" height="62" viewBox="0 0 62 62">
                <defs>
                  <linearGradient id="badge" x2="0" y2="1">
                    <stop offset="0" stopColor="#f04848" />
                    <stop offset="1" stopColor="#ff9b96" />
                  </linearGradient>
                </defs>
                <circle cx="31" cy="31" r="31" fill="url(#badge)" />
                <path d="M24 15h15l1 32H23zM13 26h7l-1 21h-8zM43 31h6l2 16h-8z" fill="#fff" />
                <path d="M28 27l4-3v15" fill="none" stroke="#f0575a" strokeWidth="3" />
              </svg>
              人气榜
              <svg width="22" height="32" viewBox="0 0 22 32">
                <path d="M4 2l14 14L4 30" fill="none" stroke="#b5a9a9" strokeWidth="4" />
              </svg>
            </CardHead>
            <CardLine $gap={21}>
              A股市场排名第<Strong>84</Strong>名
            </CardLine>
            <CardLine $gap={8}>
              较昨日
              <svg width="34" height="36" viewBox="0 0 36 36">
                <path d="M16 1l12 16h-9v17h-6V17H4z" fill="#ff3000" />
              </svg>
              <Strong>51</Strong>
              &nbsp;名
            </CardLine>
          </Card>
          <Card>
            <Watermark viewBox="926 2172 300 260">
              <path d="M946 2172h280v260h-60V2310H960z" fill="#fff4f4" />
              <g fontSize="216" fontWeight="900" fontStyle="italic" strokeLinejoin="round" paintOrder="stroke">
                <text x="1006" y="2376" fill="#fff0f1" stroke="#fffaf7" strokeWidth="40">VS</text>
              </g>
            </Watermark>
            <CardHead>
              <svg width="62" height="62" viewBox="0 0 62 62">
                <circle cx="31" cy="31" r="31" fill="url(#badge)" />
                <text x="30" y="44" textAnchor="middle" fontSize="36" fontWeight="900" fontStyle="italic" fill="#fff">VS</text>
              </svg>
              多空看盘
            </CardHead>
            <Vote>
              <VoteSide>
                <VoteDot>
                  <svg width="30" height="26" viewBox="0 0 30 26">
                    <path d="M15 3L3 22h24z" fill="#fa3200" stroke="#fa3200" strokeWidth="4" strokeLinejoin="round" />
                  </svg>
                </VoteDot>
                <span>
                  看涨
                  <br />
                  **%
                </span>
              </VoteSide>
              <VoteSide $down>
                <VoteDot>
                  <svg width="30" height="26" viewBox="0 0 30 26">
                    <path d="M15 22L3 3h24z" fill="#00ad58" stroke="#00ad58" strokeWidth="4" strokeLinejoin="round" />
                  </svg>
                </VoteDot>
                <span>
                  看跌
                  <br />
                  **%
                </span>
              </VoteSide>
            </Vote>
          </Card>
        </Cards>

        <FilterRow>
          <SortButton $on>
            最新
            <svg width="30" height="18" viewBox="0 0 30 18">
              <path d="M2 3l13 12L28 3" fill="none" stroke="#8a8a8a" strokeWidth="4" />
            </svg>
          </SortButton>
          <SortButton>最热</SortButton>
          <AllButton>
            <svg width="56" height="60" viewBox="0 0 56 60">
              <path d="M5 5q0-2 2-2h40q2 0 2 2v8L34 31v27H20V31L5 13z" fill="none" stroke={C.ink} strokeWidth="5" strokeLinejoin="round" />
              <rect x="39" y="35" width="15" height="6" rx="3" fill={C.accent} />
            </svg>
            全部
          </AllButton>
        </FilterRow>
      </Scroll>

      <Bottom>
        <BottomRow>
          <IndexBox href="#index">
            <svg width="26" height="10" viewBox="0 0 26 10">
              <path d="M13 0l13 10H0z" fill="#77797c" />
            </svg>
            <IndexValue>3890.45</IndexValue>
            <IndexDetail>
              <Muted>上证</Muted>
              0.36%
            </IndexDetail>
          </IndexBox>
          {nav.map((n) => (
            <NavItem key={n.label}>
              <svg width="80" height="78" viewBox="0 0 80 78" fill="none" stroke="#636363" strokeWidth="4" strokeLinecap="round">
                {n.icon}
              </svg>
              {n.label}
            </NavItem>
          ))}
        </BottomRow>
        <HomeBar />
      </Bottom>
    </Page>
  );
}
